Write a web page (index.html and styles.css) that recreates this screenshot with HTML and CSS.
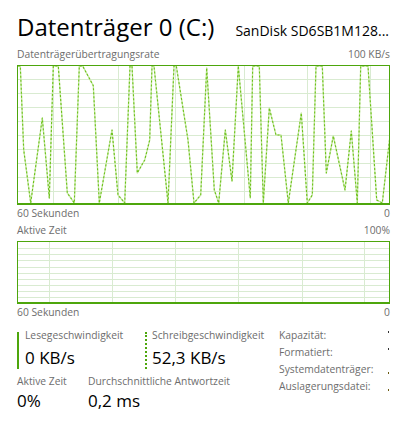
FILE: index.html
```html
<!DOCTYPE html>
<html lang="de">
<head>
<meta charset="utf-8">
<title>Datenträger 0 (C:)</title>
<link rel="stylesheet" href="styles.css">
</head>
<body>
<div class="page">
  <header class="head">
    <h1 class="title">Datenträger 0 (C:)</h1>
    <span class="model">SanDisk SD6SB1M128...</span>
  </header>

  <section class="graph">
    <div class="axis axis-top"><span>Datenträgerübertragungsrate</span><span>100 KB/s</span></div>
    <svg class="chart chart-rate" width="373" height="140" viewBox="0 0 373 140">
      <g class="grid">
        <line x1="0" y1="14.5" x2="373" y2="14.5"/>
        <line x1="0" y1="28.5" x2="373" y2="28.5"/>
        <line x1="0" y1="42.5" x2="373" y2="42.5"/>
        <line x1="0" y1="56.5" x2="373" y2="56.5"/>
        <line x1="0" y1="70.5" x2="373" y2="70.5"/>
        <line x1="0" y1="84.5" x2="373" y2="84.5"/>
        <line x1="0" y1="98.5" x2="373" y2="98.5"/>
        <line x1="0" y1="112.5" x2="373" y2="112.5"/>
        <line x1="0" y1="126.5" x2="373" y2="126.5"/>
        <line x1="36.5" y1="0" x2="36.5" y2="140"/>
        <line x1="101.5" y1="0" x2="101.5" y2="140"/>
        <line x1="158.5" y1="0" x2="158.5" y2="140"/>
        <line x1="227.5" y1="0" x2="227.5" y2="140"/>
        <line x1="290.5" y1="0" x2="290.5" y2="140"/>
        <line x1="353.5" y1="0" x2="353.5" y2="140"/>
      </g>
      <polyline class="series-under" points="1,1 3.3,1 6.7,84.7 13.7,138 25.3,53 32.3,133 36.3,1 41.3,1 50.3,128 57.3,138 62.3,1 65.7,1 76.3,20.7 82.3,138 95,65 101,130 107.7,138 113,1 115,1 120.3,108 127.7,95 132.7,75 135,1 137,1 151,138 157,1 159.3,1 171,75 177,138 183.7,130 189.7,3 197.3,125 201.7,138 208.3,65 215,116 221.3,1 233.3,133 235.7,1 242.3,1 246.3,138 252.3,43 259,70 264,70 271.3,138 284.3,48 290.3,138 295.3,130 299,1 305.3,1 309.3,108 316.3,71 328,125 334.3,66 340.3,138 343.7,1 351,1 359.7,135 365.3,138 372.7,73"/>
      <polyline class="series" points="1,1 3.3,1 6.7,84.7 13.7,138 25.3,53 32.3,133 36.3,1 41.3,1 50.3,128 57.3,138 62.3,1 65.7,1 76.3,20.7 82.3,138 95,65 101,130 107.7,138 113,1 115,1 120.3,108 127.7,95 132.7,75 135,1 137,1 151,138 157,1 159.3,1 171,75 177,138 183.7,130 189.7,3 197.3,125 201.7,138 208.3,65 215,116 221.3,1 233.3,133 235.7,1 242.3,1 246.3,138 252.3,43 259,70 264,70 271.3,138 284.3,48 290.3,138 295.3,130 299,1 305.3,1 309.3,108 316.3,71 328,125 334.3,66 340.3,138 343.7,1 351,1 359.7,135 365.3,138 372.7,73"/>
      <rect class="frame" x="0.5" y="0.5" width="372" height="139"/>
      <line class="base" x1="0" y1="139" x2="373" y2="139"/>
    </svg>
    <div class="axis axis-bottom"><span>60 Sekunden</span><span>0</span></div>
  </section>

  <section class="graph">
    <div class="axis axis-top"><span>Aktive Zeit</span><span>100%</span></div>
    <svg class="chart chart-active" width="373" height="63" viewBox="0 0 373 63">
      <g class="grid">
        <line x1="0" y1="7.5" x2="373" y2="7.5"/>
        <line x1="0" y1="13.5" x2="373" y2="13.5"/>
        <line x1="0" y1="19.5" x2="373" y2="19.5"/>
        <line x1="0" y1="26.5" x2="373" y2="26.5"/>
        <line x1="0" y1="32.5" x2="373" y2="32.5"/>
        <line x1="0" y1="38.5" x2="373" y2="38.5"/>
        <line x1="0" y1="44.5" x2="373" y2="44.5"/>
        <line x1="0" y1="50.5" x2="373" y2="50.5"/>
        <line x1="0" y1="56.5" x2="373" y2="56.5"/>
        <line x1="32.5" y1="0" x2="32.5" y2="63"/>
        <line x1="95.5" y1="0" x2="95.5" y2="63"/>
        <line x1="158.5" y1="0" x2="158.5" y2="63"/>
        <line x1="221.5" y1="0" x2="221.5" y2="63"/>
        <line x1="285.5" y1="0" x2="285.5" y2="63"/>
        <line x1="347.5" y1="0" x2="347.5" y2="63"/>
      </g>
      <rect class="frame" x="0.5" y="0.5" width="372" height="62"/>
      <line class="base" x1="0" y1="62" x2="373" y2="62"/>
    </svg>
    <div class="axis axis-bottom"><span>60 Sekunden</span><span>0</span></div>
  </section>

  <section class="stats">
    <div class="stats-main">
      <div class="row row-speeds">
        <div class="stat stat-read">
          <span class="stat-label">Lesegeschwindigkeit</span>
          <span class="stat-value">0 KB/s</span>
        </div>
        <div class="stat stat-write">
          <span class="stat-label">Schreibgeschwindigkeit</span>
          <span class="stat-value">52,3 KB/s</span>
        </div>
      </div>
      <div class="row row-minor">
        <div class="stat stat-active">
          <span class="stat-label">Aktive Zeit</span>
          <span class="stat-value">0%</span>
        </div>
        <div class="stat stat-resp">
          <span class="stat-label">Durchschnittliche Antwortzeit</span>
          <span class="stat-value">0,2 ms</span>
        </div>
      </div>
    </div>
    <dl class="props">
      <div class="prop"><dt>Kapazität:</dt><dd class="cut cut-top" aria-hidden="true"></dd></div>
      <div class="prop"><dt>Formatiert:</dt><dd class="cut cut-top" aria-hidden="true"></dd></div>
      <div class="prop"><dt>Systemdatenträger:</dt><dd class="cut cut-low" aria-hidden="true"></dd></div>
      <div class="prop"><dt>Auslagerungsdatei:</dt><dd class="cut cut-low" aria-hidden="true"></dd></div>
    </dl>
  </section>
</div>
</body>
</html>
```

FILE: styles.css
```css
html, body {
  margin: 0;
  padding: 0;
  background: #ffffff;
}

body {
  font-family: "Open Sans", "Noto Sans", "Liberation Sans", sans-serif;
  color: #000;
  width: 402px;
  height: 426px;
  overflow: hidden;
}

.page {
  padding: 0 12px 0 17px;
  display: flex;
  flex-direction: column;
}

.head {
  display: flex;
  justify-content: space-between;
  align-items: baseline;
  height: 48px;
}

.title {
  margin: 0;
  font-weight: 400;
  font-size: 24px;
  line-height: 1;
  padding-top: 15px;
  color: #000;
}

.model {
  font-size: 14px;
  color: #000;
  margin-right: 1px;
}

.graph {
  display: flex;
  flex-direction: column;
}

.axis {
  display: flex;
  justify-content: space-between;
  font-size: 10.3px;
  color: #6d6d6d;
  line-height: 13px;
}

.axis-top {
  height: 17px;
}

.axis-bottom {
  height: 17px;
  padding-top: 2px;
}

.chart {
  display: block;
}

.grid line {
  stroke: #d9ebd1;
  stroke-width: 1;
}

.frame {
  fill: none;
  stroke: #4da60c;
  stroke-width: 1;
}

.base {
  stroke: #4da60c;
  stroke-width: 2;
}

.series-under {
  fill: none;
  stroke: #c8e8a6;
  stroke-width: 1.4;
  stroke-linejoin: round;
}

.series {
  fill: none;
  stroke: #6cc21a;
  stroke-width: 1.1;
  stroke-dasharray: 2 2;
  stroke-linejoin: round;
}

.stats {
  display: flex;
  margin-top: 9px;
}

.stats-main {
  flex: 1;
  display: flex;
  flex-direction: column;
}

.row {
  display: flex;
}

.stat {
  display: flex;
  flex-direction: column;
}

.stat-label {
  font-size: 10.3px;
  color: #6d6d6d;
  line-height: 13px;
}

.stat-value {
  font-size: 17px;
  line-height: 22px;
  color: #000;
}

.row-speeds .stat {
  height: 37px;
}

.row-speeds .stat-label {
  margin-top: -3px;
}

.row-speeds .stat-value {
  margin-top: 5px;
}

.stat-read {
  width: 120px;
  border-left: 2px solid #4da60c;
  padding-left: 6px;
}

.stat-write {
  border-left: 2px dotted #4da60c;
  padding-left: 5px;
}

.row-minor {
  margin-top: 6px;
}

.row-minor .stat-value {
  margin-top: 2px;
}

.stat-active {
  width: 71px;
}

.props {
  margin: -3px 0 0;
  width: 111px;
  display: flex;
  flex-direction: column;
}

.prop {
  display: flex;
  justify-content: space-between;
  height: 17px;
  font-size: 10.3px;
  line-height: 13px;
}

.prop dt {
  color: #6d6d6d;
}

.cut {
  margin: 0 1px 0 0;
  width: 1px;
  height: 2px;
  background: #333;
}

.cut-top {
  align-self: flex-start;
  margin-top: 2px;
}

.cut-low {
  align-self: flex-end;
  margin-bottom: 6px;
  background: #6b5a10;
}
```
